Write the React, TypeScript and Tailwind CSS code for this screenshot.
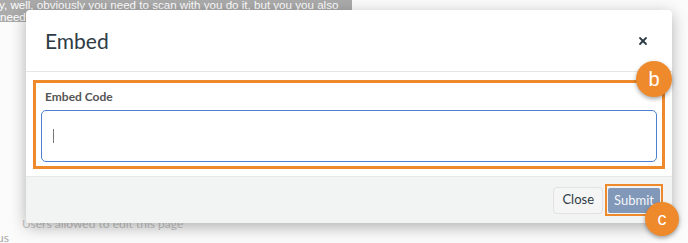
import { X } from 'lucide-react';

// Page behind the dialog (partly hidden by it)
function BackgroundPage() {
    return (
        <div className="flex h-full flex-col bg-[#fbfbfb]">
            <div className="-ml-[2px] font-['Liberation_Sans',Arial,sans-serif] text-[11.6px] leading-[11.5px] text-white">
                <span className="-mt-[1px] block w-[354px] bg-[#ababab] pl-[1px]">
                    y, well, obviously you need to scan with you do it, but you you also
                </span>
                <span className="block w-[30px] bg-[#ababab] pl-[2px]">need</span>
            </div>
            <div className="mt-[68px] h-[3px] w-[26px] bg-[#cbcbcb]" />
            <div className="mt-[66px] h-px w-[26px] bg-[#dfe6ef]" />
            <div className="mt-[61px] pl-[22px] font-['Lato',sans-serif] text-[12px] leading-[14px] text-[#c4c4c4]">
                Users allowed to edit this page
            </div>
            <div className="-ml-[3px] font-['Lato',sans-serif] text-[12px] leading-[14px] text-[#a8a8a8]">us</div>
        </div>
    );
}

function Badge({ letter, className }: { letter: string; className: string }) {
    return (
        <div
            className={`absolute flex items-center justify-center rounded-full bg-[#ee8a2c] font-['Liberation_Sans',Arial,sans-serif] text-white shadow-[0_2px_4px_rgba(0,0,0,0.35)] ${className}`}
        >
            {letter}
        </div>
    );
}

export default function App() {
    return (
        <div className="relative h-[243px] w-[688px] overflow-hidden font-['Lato',sans-serif]">
            <BackgroundPage />

            {/* Dialog */}
            <div className="absolute left-[26px] top-[10px] flex h-[213px] w-[646px] flex-col rounded-[4px] bg-white shadow-[0_4px_16px_rgba(0,0,0,0.3)]">
                <header className="flex h-[62px] items-center justify-between border-b border-[#e6e6e6] pl-[19px] pr-[23px]">
                    <h2 className="text-[21px] font-normal text-[#2d3b45]">Embed</h2>
                    <X className="h-[12px] w-[12px] text-[#2d3b45]" strokeWidth={3.6} />
                </header>

                <div className="px-[7px] pb-[7px] pt-[8px]">
                    <div className="border-[3px] border-[#ee8a2c] px-[5px] pb-[4px] pt-[6px]">
                        <label className="ml-[4px] block text-[12px] font-bold leading-[16px] text-[#555555]">
                            Embed Code
                        </label>
                        <div className="mt-[5px] flex h-[52px] items-center rounded-[5px] border-[1.5px] border-[#4d80cf] pl-[11px]">
                            <span className="h-[14px] w-px bg-[#777777]" />
                        </div>
                    </div>
                </div>

                <footer className="flex flex-1 items-center justify-end gap-[2px] rounded-b-[4px] border-t border-[#e8e8e8] bg-[#f2f3f3] pr-[9px]">
                    <button className="h-[27px] rounded-[4px] border border-[#e2e2e2] bg-[#f5f5f5] px-[8px] text-[13px] text-[#2d3b45]">
                        Close
                    </button>
                    <div className="border-[2px] border-[#ee8a2c] p-px">
                        <button className="h-[25px] rounded-[2px] bg-[#8198b9] px-[6px] text-[13px] text-[#f3f5f8]">
                            Submit
                        </button>
                    </div>
                </footer>
            </div>

            <Badge letter="b" className="left-[636px] top-[61px] h-[36px] w-[36px] text-[20px]" />
            <Badge letter="c" className="left-[645px] top-[202px] h-[34px] w-[34px] text-[18px]" />
        </div>
    );
}
